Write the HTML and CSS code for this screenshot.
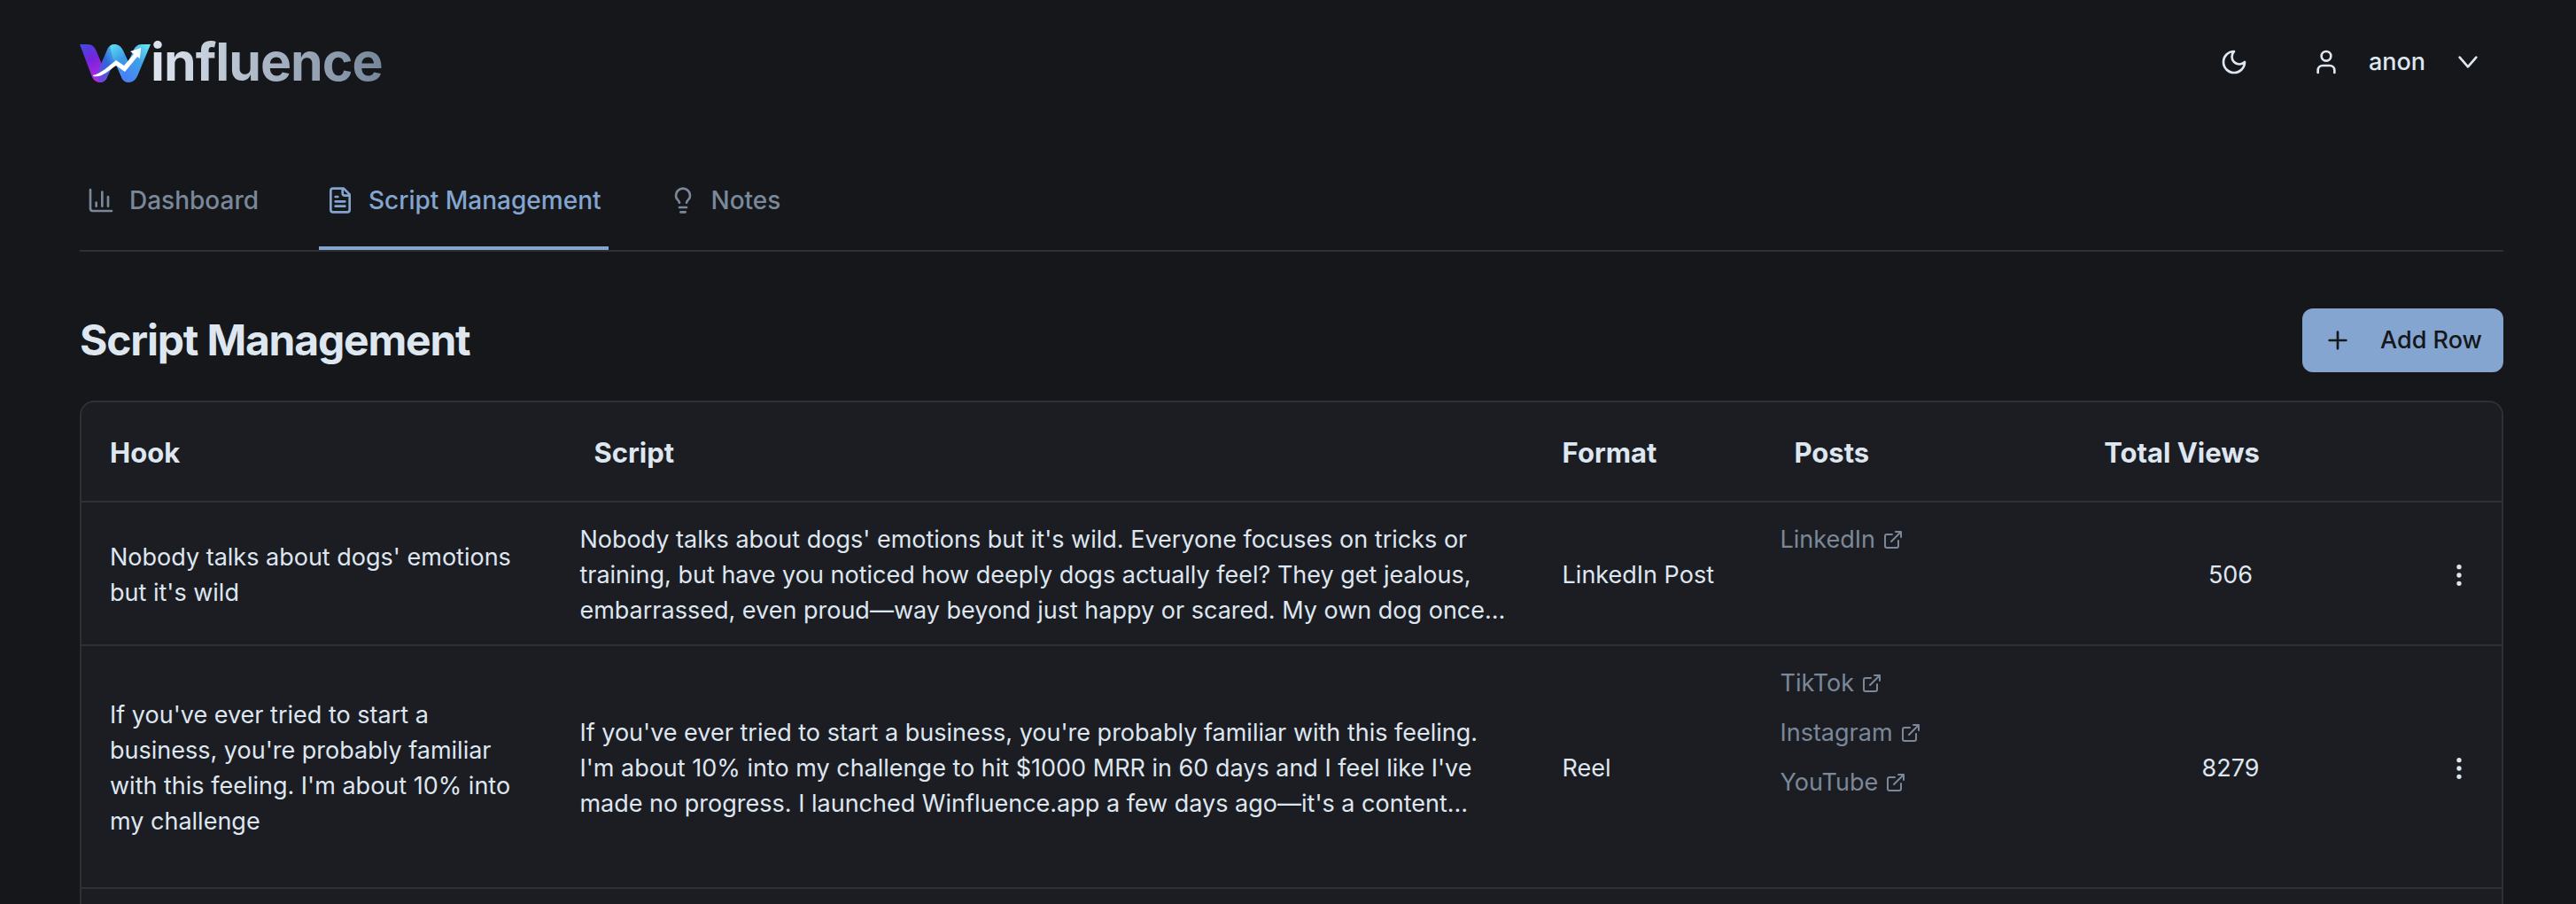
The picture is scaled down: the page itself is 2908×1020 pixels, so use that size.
FILE: index.html
```html
<!DOCTYPE html>
<html lang="en">

<head>
    <meta charset="UTF-8">
    <meta name="viewport" content="width=device-width, initial-scale=1.0">
    <title>Winfluence - Script Management</title>
    <link rel="stylesheet" href="styles.css">
</head>

<body>
    <!-- shared icons -->
    <svg class="sprite" aria-hidden="true">
        <symbol id="icon-external" viewBox="0 0 24 24">
            <path d="M15 3h6v6M10 14 21 3M18 13v6a2 2 0 0 1-2 2H5a2 2 0 0 1-2-2V8a2 2 0 0 1 2-2h6" />
        </symbol>
        <symbol id="icon-dots" viewBox="0 0 24 24">
            <circle cx="12" cy="12" r="1" />
            <circle cx="12" cy="5" r="1" />
            <circle cx="12" cy="19" r="1" />
        </symbol>
    </svg>

    <header class="header">
        <a href="#" class="logo">
            <svg class="logo-mark" viewBox="0 0 80 44" aria-hidden="true">
                <defs>
                    <linearGradient id="w-left" x1="0" y1="0" x2="0.4" y2="1">
                        <stop offset="0" stop-color="#3a4fe0" />
                        <stop offset="0.5" stop-color="#7a22dc" />
                        <stop offset="1" stop-color="#b02be0" />
                    </linearGradient>
                    <linearGradient id="w-mid" x1="1" y1="0" x2="0" y2="1">
                        <stop offset="0" stop-color="#5fe0f5" />
                        <stop offset="0.5" stop-color="#2f68d8" />
                        <stop offset="1" stop-color="#8a35e0" />
                    </linearGradient>
                    <linearGradient id="w-down" x1="0" y1="0" x2="0.5" y2="1">
                        <stop offset="0" stop-color="#62e2f6" />
                        <stop offset="0.5" stop-color="#3a9ae6" />
                        <stop offset="1" stop-color="#4a86f8" />
                    </linearGradient>
                    <linearGradient id="w-right" x1="1" y1="0" x2="0.3" y2="1">
                        <stop offset="0" stop-color="#66ecf0" />
                        <stop offset="0.5" stop-color="#3fa0ea" />
                        <stop offset="1" stop-color="#4a80f5" />
                    </linearGradient>
                </defs>
                <path fill="url(#w-left)" d="M0 0H9C14 0 17 3 19 8L31 37C28 45 18 45 14 37Z" />
                <path fill="url(#w-mid)" d="M22 43C28 43 30 40 32 35L45 8C46 -2 34 -2 31 6L19 34Z" />
                <path fill="url(#w-down)" d="M34 2C39 -2 46 0 49 7L62 35C61 44 51 46 47 37L37 14Z" />
                <path fill="url(#w-right)" d="M80 0H70C65 0 62 3 60 8L47 37C50 45 61 45 65 36Z" />
                <path fill="#fff" d="M15 35C24 33 32 25 41 18L50 24L61 11L57 8L69 4L68 16L65 14L51 31L41 24C32 30 25 38 15 36Z" />
            </svg>
            <span class="logo-text">influence</span>
        </a>
        <div class="header-actions">
            <button class="icon-button" aria-label="Toggle theme">
                <svg class="icon" viewBox="0 0 24 24">
                    <path d="M12 3a6 6 0 0 0 9 9 9 9 0 1 1-9-9Z" />
                </svg>
            </button>
            <button class="user-button">
                <svg class="icon" viewBox="0 0 24 24">
                    <path d="M19 21v-2a4 4 0 0 0-4-4H9a4 4 0 0 0-4 4v2" />
                    <circle cx="12" cy="7" r="4" />
                </svg>
                anon
                <svg class="icon" viewBox="0 0 24 24">
                    <path d="m5 8 7 8 7-8" />
                </svg>
            </button>
        </div>
    </header>

    <nav class="tabs">
        <a href="#" class="tab">
            <svg class="icon" viewBox="0 0 24 24">
                <path d="M3 3v16a2 2 0 0 0 2 2h16M18 17V9M13 17V5M8 17v-3" />
            </svg>
            Dashboard
        </a>
        <a href="#" class="tab active" aria-current="page">
            <svg class="icon" viewBox="0 0 24 24">
                <path d="M15 2H6a2 2 0 0 0-2 2v16a2 2 0 0 0 2 2h12a2 2 0 0 0 2-2V7ZM14 2v4a2 2 0 0 0 2 2h4M10 9H8M16 13H8M16 17H8" />
            </svg>
            Script Management
        </a>
        <a href="#" class="tab">
            <svg class="icon" viewBox="0 0 24 24">
                <path d="M15 14c.2-1 .7-1.700 1.500-2.500 1-.9 1.500-2.200 1.500-3.500A6 6 0 0 0 6 8c0 1 .2 2.200 1.500 3.500.7.7 1.300 1.500 1.500 2.500M9 18h6M10 22h4" />
            </svg>
            Notes
        </a>
    </nav>

    <main>
        <div class="title-row">
            <h1>Script Management</h1>
            <button class="add-button">
                <svg class="icon" viewBox="0 0 24 24">
                    <path d="M5 12h14M12 5v14" />
                </svg>
                Add Row
            </button>
        </div>

        <div class="table-box">
            <table>
                <colgroup>
                    <col class="col-hook">
                    <col class="col-script">
                    <col class="col-format">
                    <col class="col-posts">
                    <col class="col-views">
                    <col class="col-menu">
                </colgroup>
                <thead>
                    <tr>
                        <th>Hook</th>
                        <th class="inset">Script</th>
                        <th>Format</th>
                        <th class="inset">Posts</th>
                        <th class="inset">Total Views</th>
                        <th></th>
                    </tr>
                </thead>
                <tbody>
                    <tr>
                        <td class="long-text">Nobody talks about dogs' emotions but it's wild</td>
                        <td class="long-text">Nobody talks about dogs' emotions but it's wild. Everyone focuses on tricks or training, but have you noticed how deeply dogs actually feel? They get jealous, embarrassed, even proud—way beyond just happy or scared. My own dog once…</td>
                        <td>LinkedIn Post</td>
                        <td class="posts">
                            <a href="#" class="post-link">LinkedIn <svg class="icon"><use href="#icon-external" /></svg></a>
                        </td>
                        <td class="views">506</td>
                        <td class="menu">
                            <button class="menu-button" aria-label="Row menu"><svg class="icon"><use href="#icon-dots" /></svg></button>
                        </td>
                    </tr>
                    <tr class="tall">
                        <td class="long-text">If you've ever tried to start a business, you're probably familiar with this feeling. I'm about 10% into my challenge</td>
                        <td class="long-text">If you've ever tried to start a business, you're probably familiar with this feeling. I'm about 10% into my challenge to hit $1000 MRR in 60 days and I feel like I've made no progress. I launched Winfluence.app a few days ago—it's a content…</td>
                        <td>Reel</td>
                        <td class="posts">
                            <a href="#" class="post-link">TikTok <svg class="icon"><use href="#icon-external" /></svg></a>
                            <a href="#" class="post-link">Instagram <svg class="icon"><use href="#icon-external" /></svg></a>
                            <a href="#" class="post-link">YouTube <svg class="icon"><use href="#icon-external" /></svg></a>
                        </td>
                        <td class="views">8279</td>
                        <td class="menu">
                            <button class="menu-button" aria-label="Row menu"><svg class="icon"><use href="#icon-dots" /></svg></button>
                        </td>
                    </tr>
                    <tr>
                        <td colspan="6"></td>
                    </tr>
                </tbody>
            </table>
        </div>
    </main>
</body>

</html>
```

FILE: styles.css
```css
* {
    box-sizing: border-box;
}

html {
    height: 100%;
    overflow: hidden;
}

body {
    font-family: Inter, "Liberation Sans", sans-serif;
    font-size: 27px;
    line-height: 40px;
    color: #dee6f0;
    background-color: #15171a;
    margin: 0;
    padding: 0 82px 0 90px;
    height: 100%;
    overflow: hidden;
}

button {
    font: inherit;
    color: inherit;
    background: none;
    border: none;
    padding: 0;
    cursor: pointer;
}

a {
    color: inherit;
    text-decoration: none;
}

.sprite {
    display: none;
}

.icon {
    width: 32px;
    height: 32px;
    fill: none;
    stroke: currentColor;
    stroke-width: 2;
    stroke-linecap: round;
    stroke-linejoin: round;
    flex-shrink: 0;
}

/* header */
.header {
    display: flex;
    align-items: center;
    justify-content: space-between;
    height: 140px;
}

.logo {
    display: flex;
    align-items: center;
}

.logo-mark {
    width: 80px;
    height: 44px;
    margin-top: 4px;
}

.logo-text {
    font-size: 59px;
    font-weight: 700;
    line-height: 72px;
    letter-spacing: -1px;
    background: linear-gradient(to right, #dee6f0, #76869a);
    -webkit-background-clip: text;
    background-clip: text;
    color: transparent;
}

.header-actions {
    display: flex;
    align-items: center;
    gap: 72px;
    padding-right: 24px;
}

.icon-button {
    display: flex;
}

.user-button {
    display: flex;
    align-items: center;
    gap: 32px;
    font-weight: 500;
}

/* tabs */
.tabs {
    display: flex;
    gap: 60px;
    height: 144px;
    border-bottom: 2px solid #2e3036;
}

.tab {
    display: flex;
    align-items: center;
    gap: 16px;
    padding: 34px 8px 0;
    height: 142px;
    border-bottom: 4px solid transparent;
    color: #7a8899;
    font-size: 28px;
    font-weight: 500;
}

.tab.active {
    color: #84a5d0;
    border-bottom-color: #84a5d0;
}

/* title */
.title-row {
    display: flex;
    align-items: center;
    justify-content: space-between;
    padding: 64px 0 32px;
}

h1 {
    font-size: 48px;
    line-height: 64px;
    font-weight: 700;
    letter-spacing: -0.025em;
    margin: 0;
}

.add-button {
    display: flex;
    align-items: center;
    gap: 32px;
    height: 72px;
    padding: 0 24px;
    border-radius: 12px;
    background-color: #84a5d0;
    color: #15171a;
    font-weight: 500;
}

/* table */
.table-box {
    border: 2px solid #2e3036;
    border-radius: 16px;
    background-color: #1c1d22;
    overflow: hidden;
}

table {
    width: 100%;
    table-layout: fixed;
    border-collapse: collapse;
}

th {
    height: 112px;
    padding: 2px 16px 0;
    text-align: left;
    font-size: 31px;
    font-weight: 700;
}

td {
    height: 160px;
    padding: 22px 16px 18px;
}

tbody tr {
    border-top: 2px solid #2e3036;
}

th:first-child,
td:first-child {
    padding-left: 32px;
}

th.inset {
    padding-left: 32px;
}

.tall td {
    height: 274px;
}

.col-hook {
    width: 20%;
}

.col-script {
    width: 40.6%;
}

.col-format {
    width: 9%;
}

.col-posts,
.col-views {
    width: 12.8%;
}

.long-text {
    padding-right: 40px;
}

.posts {
    vertical-align: top;
}

.post-link {
    display: flex;
    align-items: center;
    gap: 8px;
    margin-bottom: 16px;
    color: #7a8899;
}

.post-link .icon {
    width: 24px;
    height: 24px;
}

.views {
    text-align: center;
}

.menu {
    padding-right: 32px;
}

.menu-button {
    display: flex;
    margin-left: auto;
}
```
